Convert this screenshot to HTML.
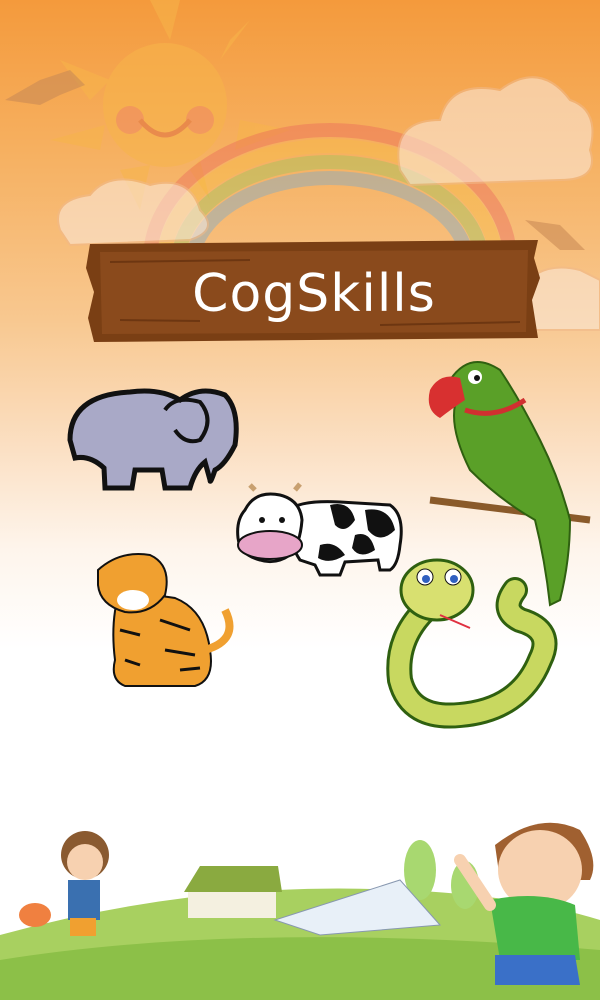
<!DOCTYPE html>
<html><head><meta charset="utf-8"><style>
html,body{margin:0;padding:0}
body{width:600px;height:1000px;overflow:hidden;position:relative;font-family:"Liberation Sans","DejaVu Sans",sans-serif;
background:linear-gradient(180deg,#f49a3c 0%,#f6b060 15%,#f8c890 32%,#fbe0c4 45%,#fef5ec 55%,#ffffff 65%,#ffffff 100%);}
svg{position:absolute;left:0;top:0}
.title{position:absolute;left:88px;top:264px;width:452px;text-align:center;color:#fff;font-size:52px;letter-spacing:1px;font-family:"DejaVu Sans","Liberation Sans",sans-serif}
</style></head><body>
<svg width="600" height="1000" viewBox="0 0 600 1000">
<g opacity="0.55">
<circle cx="165" cy="105" r="62" fill="#f7b54a"/>
<g fill="#f7b54a">
<polygon points="150,0 180,0 170,40"/><polygon points="60,60 110,80 90,100"/><polygon points="50,140 105,125 100,150"/>
<polygon points="230,40 250,20 220,60"/><polygon points="240,120 290,130 235,150"/><polygon points="120,170 140,210 150,165"/><polygon points="190,170 210,200 200,160"/>
</g>
<circle cx="130" cy="120" r="14" fill="#f08a60"/><circle cx="200" cy="120" r="14" fill="#f08a60"/>
<path d="M140 120 Q165 150 190 120" stroke="#e07040" stroke-width="5" fill="none"/>
</g>
<g fill="none" opacity="0.35" stroke-width="14">
<path d="M150 260 A180 130 0 0 1 510 260" stroke="#e85a5a"/>
<path d="M164 262 A166 116 0 0 1 496 262" stroke="#f7c040"/>
<path d="M178 264 A152 102 0 0 1 482 264" stroke="#8ac858"/>
<path d="M192 266 A138 88 0 0 1 468 266" stroke="#60a8e0"/>
</g>
<g fill="#fbe7d6" opacity="0.6" stroke="#f1b989" stroke-width="2">
<path d="M400 170 Q390 120 440 120 Q450 80 500 90 Q540 60 570 100 Q600 110 590 150 Q600 180 560 180 L410 185 Z"/>
<path d="M60 230 Q50 200 90 195 Q110 170 150 185 Q190 175 200 210 Q220 230 190 240 L70 245 Z"/>
<path d="M520 290 Q540 260 580 270 L600 280 L600 330 L520 330 Z"/>
</g>
<path d="M5 100 L40 80 L70 70 L85 85 L60 95 L40 105 Z" fill="#c98a55" opacity="0.6"/>
<path d="M525 220 L560 225 L585 250 L560 250 Z" fill="#c98a55" opacity="0.6"/>
<path d="M90 244 L538 240 L534 258 L540 278 L532 300 L538 338 L94 342 L88 318 L94 292 L86 268 Z" fill="#7a3f14"/>
<path d="M100 252 L528 250 L526 332 L102 334 Z" fill="#8a4a1c"/>
<g stroke="#5a2a0a" stroke-width="2" opacity="0.6"><line x1="110" y1="262" x2="250" y2="260"/><line x1="380" y1="325" x2="520" y2="322"/><line x1="120" y1="320" x2="200" y2="321"/></g>
<path d="M70 440 Q70 395 130 392 Q160 388 180 400 Q200 385 225 395 Q240 410 235 445 Q225 465 215 470 Q210 485 210 480 L205 462 Q195 470 190 488 L165 488 L162 470 L135 470 L132 488 L105 488 L104 468 Q90 455 75 458 Z" fill="#a9a9c7" stroke="#111" stroke-width="5"/>
<path d="M165 410 Q175 395 200 402 Q215 420 200 440 Q185 445 175 430" fill="none" stroke="#111" stroke-width="4"/>
<g>
<path d="M290 510 Q300 500 340 502 L390 505 Q405 515 400 545 Q398 565 390 570 L380 570 L378 560 L345 562 L340 575 L320 575 L315 565 L300 560 Q290 545 290 530 Z" fill="#fff" stroke="#111" stroke-width="3"/>
<path d="M330 505 Q350 500 355 520 Q345 535 335 525 Z M365 510 Q390 506 395 530 Q380 545 368 530 Z M320 545 Q335 540 345 555 Q330 565 318 558 Z M355 535 Q370 530 375 550 Q360 560 352 548 Z" fill="#111"/>
<path d="M245 510 Q255 490 280 495 Q300 500 302 520 Q300 545 290 555 Q275 565 260 560 Q240 555 238 538 Q236 520 245 510 Z" fill="#fff" stroke="#111" stroke-width="3"/>
<ellipse cx="270" cy="545" rx="32" ry="14" fill="#e7a5c8" stroke="#111" stroke-width="2"/>
<path d="M255 490 L250 485 M295 490 L300 484" stroke="#c8a070" stroke-width="5"/>
<circle cx="262" cy="520" r="3" fill="#111"/><circle cx="282" cy="520" r="3" fill="#111"/>
</g>
<g>
<path d="M120 590 Q110 620 115 660 Q110 680 125 686 L195 686 Q215 680 210 650 Q205 610 175 598 Z" fill="#f0a030" stroke="#111" stroke-width="2"/>
<path d="M205 650 Q240 640 225 610" fill="none" stroke="#f0a030" stroke-width="8"/>
<path d="M98 570 Q120 550 150 555 Q172 565 165 595 Q150 615 125 612 Q100 605 98 585 Z" fill="#f0a030" stroke="#111" stroke-width="2"/>
<ellipse cx="133" cy="600" rx="16" ry="10" fill="#fff"/>
<g stroke="#111" stroke-width="3"><line x1="120" y1="630" x2="140" y2="635"/><line x1="160" y1="620" x2="190" y2="630"/><line x1="165" y1="650" x2="195" y2="655"/><line x1="125" y1="660" x2="140" y2="665"/><line x1="180" y1="670" x2="200" y2="668"/></g>
</g>
<g>
<path d="M430 500 L590 520" stroke="#8a5a2a" stroke-width="7"/>
<path d="M450 380 Q470 350 500 370 Q520 400 540 440 Q560 480 570 520 Q570 560 560 600 L550 605 Q545 560 535 520 Q500 500 470 470 Q450 430 455 405 Z" fill="#5aa028" stroke="#2f6010" stroke-width="2"/>
<path d="M430 390 Q440 372 460 378 L465 400 Q450 410 440 418 Q425 410 430 390 Z" fill="#d83030"/>
<circle cx="475" cy="377" r="7" fill="#fff"/><circle cx="477" cy="378" r="3" fill="#111"/>
<path d="M465 410 Q495 420 525 400" stroke="#d03030" stroke-width="5" fill="none"/>
</g>
<g>
<path d="M425 610 Q395 640 400 680 Q410 720 460 715 Q520 710 540 660 Q555 630 520 620 Q500 610 515 590" fill="none" stroke="#2f6010" stroke-width="26" stroke-linecap="round"/>
<path d="M425 610 Q395 640 400 680 Q410 720 460 715 Q520 710 540 660 Q555 630 520 620 Q500 610 515 590" fill="none" stroke="#c8d860" stroke-width="20" stroke-linecap="round"/>
<ellipse cx="437" cy="590" rx="36" ry="30" fill="#d8e070" stroke="#2f6010" stroke-width="3"/>
<circle cx="425" cy="577" r="8" fill="#fff" stroke="#111"/><circle cx="453" cy="577" r="8" fill="#fff" stroke="#111"/>
<circle cx="426" cy="579" r="4" fill="#3060c0"/><circle cx="454" cy="579" r="4" fill="#3060c0"/>
<path d="M440 615 L470 628" stroke="#e03040" stroke-width="2"/>
</g>
<path d="M0 935 Q200 880 400 890 Q520 895 600 920 L600 1000 L0 1000 Z" fill="#a8d060"/>
<path d="M0 960 Q250 920 600 950 L600 1000 L0 1000 Z" fill="#8cc048"/>
<ellipse cx="420" cy="870" rx="16" ry="30" fill="#a8d870"/><ellipse cx="465" cy="885" rx="14" ry="24" fill="#a8d870"/>
<rect x="188" y="890" width="88" height="28" fill="#f4f0e0"/><polygon points="184,892 200,866 278,866 282,892" fill="#8aaa40"/>
<polygon points="275,920 400,880 440,925 320,935" fill="#e8f0f8" stroke="#8898b0"/>
<circle cx="85" cy="855" r="24" fill="#8a5a30"/><circle cx="85" cy="862" r="18" fill="#f7d1b0"/>
<rect x="68" y="880" width="32" height="40" fill="#3a70b0"/><rect x="70" y="918" width="26" height="18" fill="#f0a030"/>
<ellipse cx="35" cy="915" rx="16" ry="12" fill="#f08040"/>
<path d="M495 845 Q540 810 580 830 Q600 860 590 880 L500 880 Z" fill="#a06030"/>
<ellipse cx="540" cy="870" rx="42" ry="40" fill="#f7d1b0"/>
<path d="M490 900 Q540 890 575 905 L580 960 L500 960 Z" fill="#48b848"/>
<path d="M495 955 L575 955 L580 985 L495 985 Z" fill="#3a70c8"/>
<path d="M490 905 L460 860" stroke="#f7d1b0" stroke-width="12" stroke-linecap="round"/>
</svg>
<div class="title">CogSkills</div>
</body></html>
